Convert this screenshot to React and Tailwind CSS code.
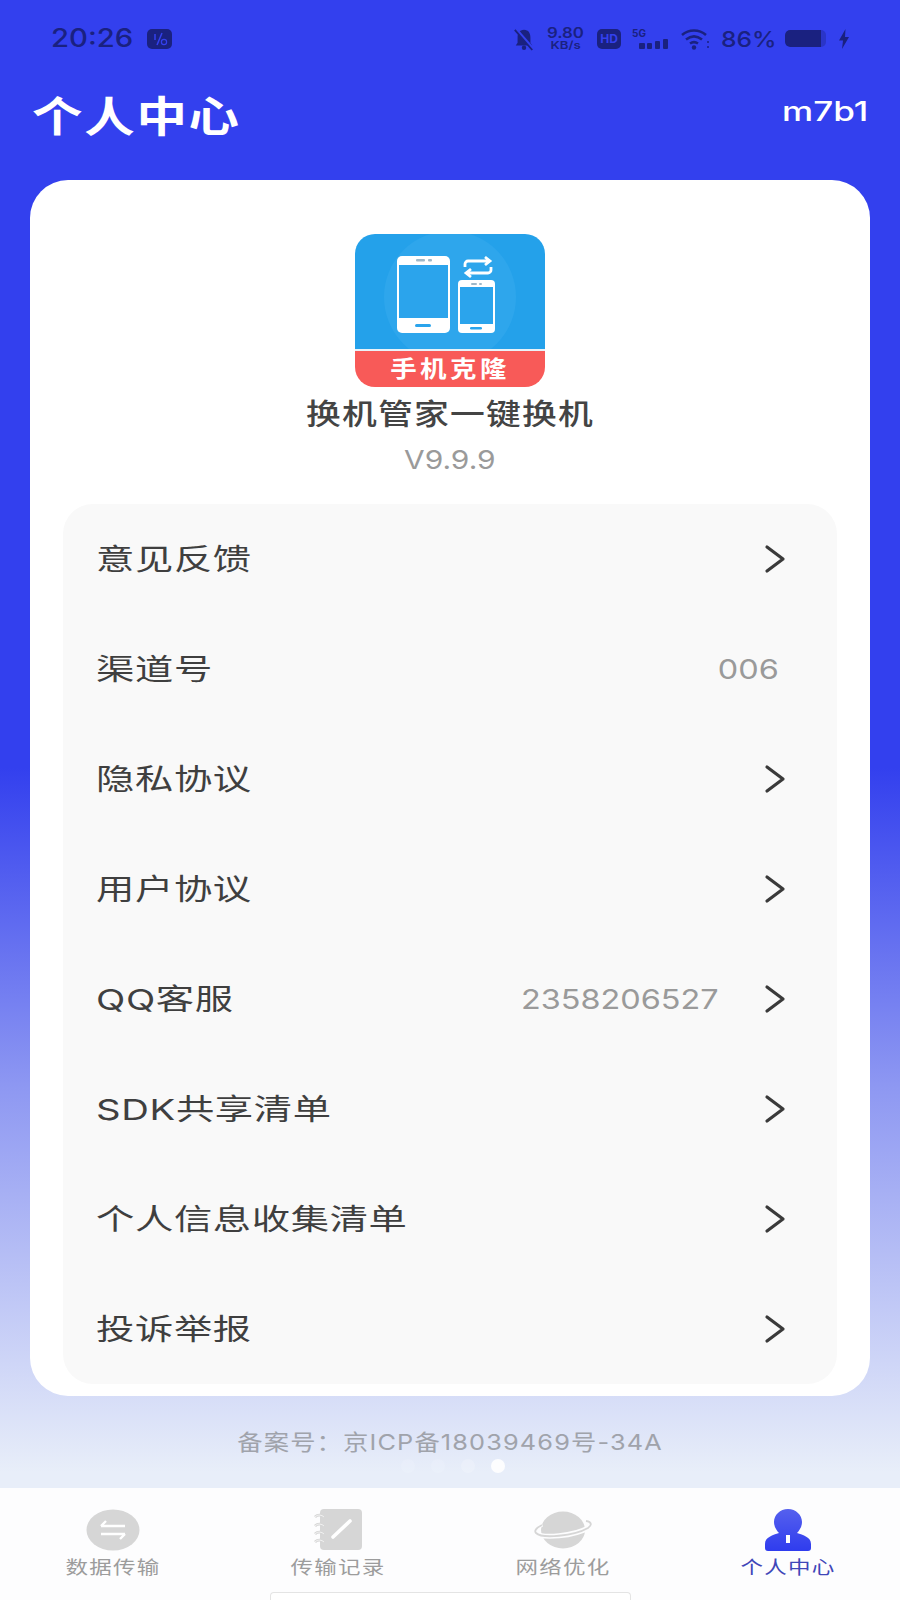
const font = "font-['Inter','Noto_Sans_CJK_SC',sans-serif]";

const rows = [
  { label: "意见反馈", arrow: true },
  { label: "渠道号", value: "006" },
  { label: "隐私协议", arrow: true },
  { label: "用户协议", arrow: true },
  { label: "QQ客服", value: "2358206527", arrow: true },
  { label: "SDK共享清单", arrow: true },
  { label: "个人信息收集清单", arrow: true },
  { label: "投诉举报", arrow: true },
];

function Chevron() {
  return (
    <svg width="24" height="30" viewBox="0 0 24 30" fill="none" className="ml-[44px]">
      <path d="M4 3 L20 15 L4 27" stroke="#3a3a3a" strokeWidth="3.2" strokeLinecap="round" strokeLinejoin="round" />
    </svg>
  );
}

function StatusBar() {
  const dark = "#1a2180";
  return (
    <div className="h-[76px] flex items-center pl-[51px] pr-[50px] pt-[1px] text-[#1a2180]">
      <span className="w-[81px] text-[25px] font-medium leading-none whitespace-nowrap origin-left scale-x-[1.17]">20:26</span>
      <svg width="25" height="20" viewBox="0 0 25 20" className="ml-[15px]">
        <rect width="25" height="20" rx="5" fill={dark} />
        <path d="M8 5v6M10 16l5-12" stroke="#3340ee" strokeWidth="1.5" />
        <circle cx="17" cy="13" r="2.600" fill="none" stroke="#3340ee" strokeWidth="1.2" />
      </svg>
      <div className="ml-auto flex items-center">
        <svg width="22" height="24" viewBox="0 0 24 26">
          <path d="M12 3c-5 0-7 4-7 8v6l-2 3h18l-2-3v-6c0-4-2-8-7-8z" fill={dark} />
          <circle cx="12" cy="22.5" r="2.4" fill={dark} />
          <path d="M3 2l19 22" stroke="#3340ee" strokeWidth="3.4" />
          <path d="M2 3l19 22" stroke={dark} strokeWidth="2" />
        </svg>
        <div className="ml-[11px] w-[39px] flex flex-col items-center">
          <span className="text-[14px] font-semibold leading-[14px] origin-center scale-x-[1.2]">9.80</span>
          <span className="text-[11px] font-semibold leading-[11px] origin-center scale-x-[1.2]">KB/s</span>
        </div>
        <div className="ml-[12px] w-[24px] h-[20px] rounded-[5px] bg-[#1a2180] flex items-center justify-center text-[#3340ee] text-[12px] font-bold leading-none">
          HD
        </div>
        <div className="ml-[11px] w-[37px] h-[22px] flex flex-col">
          <span className="text-[10px] font-bold leading-[11px]">5G</span>
          <svg width="37" height="11" viewBox="0 0 37 11">
            <rect x="7" y="4" width="6" height="6" rx="1" fill={dark} />
            <rect x="15" y="4" width="5" height="6" rx="1" fill={dark} />
            <rect x="23" y="2" width="5" height="8" rx="1" fill={dark} />
            <rect x="31" y="0" width="5" height="10" rx="1" fill={dark} />
          </svg>
        </div>
        <svg width="30" height="22" viewBox="0 0 30 22" className="ml-[11px]">
          <path d="M2 7c7-6 17-6 24 0M6 11.500c5-4 11-4 16 0M10 15.500c3-2 5-2 8 0" fill="none" stroke={dark} strokeWidth="2.600" />
          <circle cx="14" cy="19.500" r="2.200" fill={dark} />
          <circle cx="28" cy="14" r="1" fill={dark} />
          <circle cx="28" cy="19" r="1" fill={dark} />
        </svg>
        <span className="ml-[11px] w-[54px] text-[22px] font-medium leading-none whitespace-nowrap origin-left scale-x-[1.12]">86%</span>
        <div className="ml-[10px] w-[41px] h-[17px] rounded-[5px] bg-[#2a35c8] overflow-hidden">
          <div className="w-[36px] h-full bg-[#1a2180] rounded-l-[5px]" />
        </div>
        <svg width="12" height="20" viewBox="0 0 12 20" className="ml-[12px]">
          <path d="M7.500 0 L1 11.500 H5 L4 20 L11 8 H7 Z" fill={dark} />
        </svg>
      </div>
    </div>
  );
}

function AppLogo() {
  return (
    <div className="w-[190px] h-[153px] rounded-[20px] overflow-hidden flex flex-col">
      <svg width="190" height="115" viewBox="0 0 190 115" className="block">
        <rect width="190" height="115" fill="#24a1ea" />
        <circle cx="95" cy="63" r="66" fill="#2ea6ec" />
        <rect x="42" y="22" width="53" height="77" rx="5" fill="#fff" />
        <rect x="44" y="31" width="49" height="53" fill="#2ba4ec" />
        <rect x="61" y="25" width="9" height="2.500" rx="1" fill="#9fb8c8" />
        <rect x="73" y="25" width="4" height="2.500" rx="1" fill="#9fb8c8" />
        <rect x="60" y="90" width="16" height="3" rx="1.500" fill="#2ba4ec" />
        <rect x="103" y="46" width="37" height="53" rx="4" fill="#fff" />
        <rect x="105" y="53" width="33" height="37" fill="#2ba4ec" />
        <rect x="116" y="49" width="6" height="2" rx="1" fill="#9fb8c8" />
        <rect x="124" y="49" width="3" height="2" rx="1" fill="#9fb8c8" />
        <rect x="115" y="93" width="12" height="2.500" rx="1.200" fill="#2ba4ec" />
        <path d="M110 33v-3a3 3 0 0 1 3-3h22M130 23l5 4-5 4" fill="none" stroke="#fff" strokeWidth="2.800" />
        <path d="M136 33v3a3 3 0 0 1-3 3h-22M116 35l-5 4 5 4" fill="none" stroke="#fff" strokeWidth="2.800" />
      </svg>
      <div className="flex-1 bg-[#f85a58] border-t-[2px] border-[#e9f2f8] flex items-center justify-center text-white text-[23px] font-bold tracking-[3px] leading-none">
        <span className="scale-x-[1.15] whitespace-nowrap">手机克隆</span>
      </div>
    </div>
  );
}

function Row({ label, value, arrow }) {
  return (
    <div className="h-[110px] flex items-center pl-[33px] pr-[50px]">
      <span className="text-[29px] tracking-[0.5px] text-[#3f3f3f] leading-none whitespace-nowrap origin-left scale-x-[1.32]">{label}</span>
      <div className="ml-auto flex items-center">
        {value && (
          <span className={`text-[27px] text-[#9a9a9a] leading-none origin-right scale-x-[1.2] ${arrow ? "" : "mr-[8px]"}`}>{value}</span>
        )}
        {arrow && <Chevron />}
      </div>
    </div>
  );
}

function Tab({ label, active, children }) {
  return (
    <div className="flex-1 flex flex-col items-center">
      <div className="h-[44px] flex items-center justify-center">{children}</div>
      <span className={`mt-[7px] text-[18px] tracking-[1px] leading-none whitespace-nowrap scale-x-[1.25] ${active ? "text-[#3f46b8]" : "text-[#9c9c9c]"}`}>{label}</span>
    </div>
  );
}

export default function App() {
  return (
    <div className={`${font} relative w-[900px] h-[1600px] overflow-hidden flex flex-col bg-[linear-gradient(180deg,#3340ee_0%,#3340ee_48%,#8e98f2_68%,#e8eef9_92%)]`}>
      <StatusBar />

      {/* title */}
      <div className="h-[104px] pl-[32px] pr-[32px] flex items-start justify-between text-white">
        <span className="text-[42px] font-bold tracking-[1.500px] leading-none mt-[20px] whitespace-nowrap origin-left scale-x-[1.2]">个人中心</span>
        <span className="text-[27px] font-medium leading-none mt-[22px] origin-right scale-x-[1.3]">m7b1</span>
      </div>

      {/* card */}
      <div className="mx-[30px] h-[1216px] bg-white rounded-[38px] pt-[54px] px-[33px] flex flex-col items-center">
        <AppLogo />
        <span className="mt-[13px] text-[29px] font-medium tracking-[1px] text-[#444] leading-none whitespace-nowrap scale-x-[1.2]">换机管家一键换机</span>
        <span className="mt-[18px] text-[26px] text-[#9a9a9a] leading-none scale-x-[1.15]">V9.9.9</span>
        <div className="mt-[31px] w-full h-[880px] bg-[#f9f9f9] rounded-[30px]">
          {rows.map((r) => (
            <Row key={r.label} {...r} />
          ))}
        </div>
      </div>

      {/* beian + pager */}
      <div className="h-[92px] flex flex-col items-center">
        <span className="mt-[35px] text-[22px] tracking-[1px] text-[#a0a3ab] leading-none whitespace-nowrap scale-x-[1.15]">备案号：京ICP备18039469号-34A</span>
        <div className="mt-[6px] flex items-center gap-[16px] ml-[5px]">
          <div className="w-[14px] h-[14px] rounded-full bg-white/10" />
          <div className="w-[14px] h-[14px] rounded-full bg-white/10" />
          <div className="w-[14px] h-[14px] rounded-full bg-white/20" />
          <div className="w-[14px] h-[14px] rounded-full bg-white/90" />
        </div>
      </div>

      {/* tabs */}
      <div className="flex-1 bg-[#fdfdfe] flex pt-[20px]">
        <Tab label="数据传输">
          <svg width="54" height="42" viewBox="0 0 54 42">
            <ellipse cx="27" cy="21" rx="26.500" ry="20.500" fill="#d6d6d6" />
            <path d="M15 17h24M20 12l-5 5M15 25h24M34 30l5-5" fill="none" stroke="#fff" strokeWidth="2.400" />
          </svg>
        </Tab>
        <Tab label="传输记录">
          <svg width="48" height="42" viewBox="0 0 48 42">
            <rect x="6" y="0" width="42" height="41" rx="4" fill="#d6d6d6" />
            <path d="M1 8c3-3 7-2 9 0M1 17c3-3 7-2 9 0M1 25c3-3 7-2 9 0M1 33c3-3 7-2 9 0" fill="none" stroke="#d6d6d6" strokeWidth="2.800" />
            <path d="M1 8c3-3 7-2 9 0M1 17c3-3 7-2 9 0M1 25c3-3 7-2 9 0M1 33c3-3 7-2 9 0" fill="none" stroke="#fdfdfe" strokeWidth="0.700" />
            <path d="M19 28L36 12" stroke="#fff" strokeWidth="3.600" strokeLinecap="round" />
          </svg>
        </Tab>
        <Tab label="网络优化">
          <svg width="58" height="38" viewBox="0 0 58 38">
            <ellipse cx="29" cy="19" rx="22" ry="18.500" fill="#d6d6d6" />
            <path d="M8 13C2 16 0 20 2 22C8 28 40 25 54 17C58 14 58 11 52 10" fill="none" stroke="#fdfdfe" strokeWidth="5" />
            <path d="M8 14C2 17 0 20 2 22C8 28 40 25 54 17C58 14 58 11 52 10" fill="none" stroke="#d6d6d6" strokeWidth="1.800" />
          </svg>
        </Tab>
        <Tab label="个人中心" active>
          <svg width="46" height="42" viewBox="0 0 46 42">
            <defs>
              <linearGradient id="me" x1="0" y1="0" x2="0" y2="1">
                <stop offset="0" stopColor="#5560ee" />
                <stop offset="1" stopColor="#2f3cee" />
              </linearGradient>
            </defs>
            <path d="M23 0c8 0 14 6 14 13 0 5-3 9-5 11 6 2 14 4 14 11v4a3 3 0 0 1-3 3H3a3 3 0 0 1-3-3v-4c0-7 8-9 14-11-2-2-5-6-5-11C9 6 15 0 23 0z" fill="url(#me)" />
            <rect x="21" y="26" width="4" height="8" fill="#fff" />
          </svg>
        </Tab>
      </div>

      {/* gesture bar */}
      <div className="absolute left-[270px] bottom-0 w-[361px] h-[8px] rounded-t-[4px] bg-white border border-b-0 border-[#e4e4e4]" />
    </div>
  );
}
